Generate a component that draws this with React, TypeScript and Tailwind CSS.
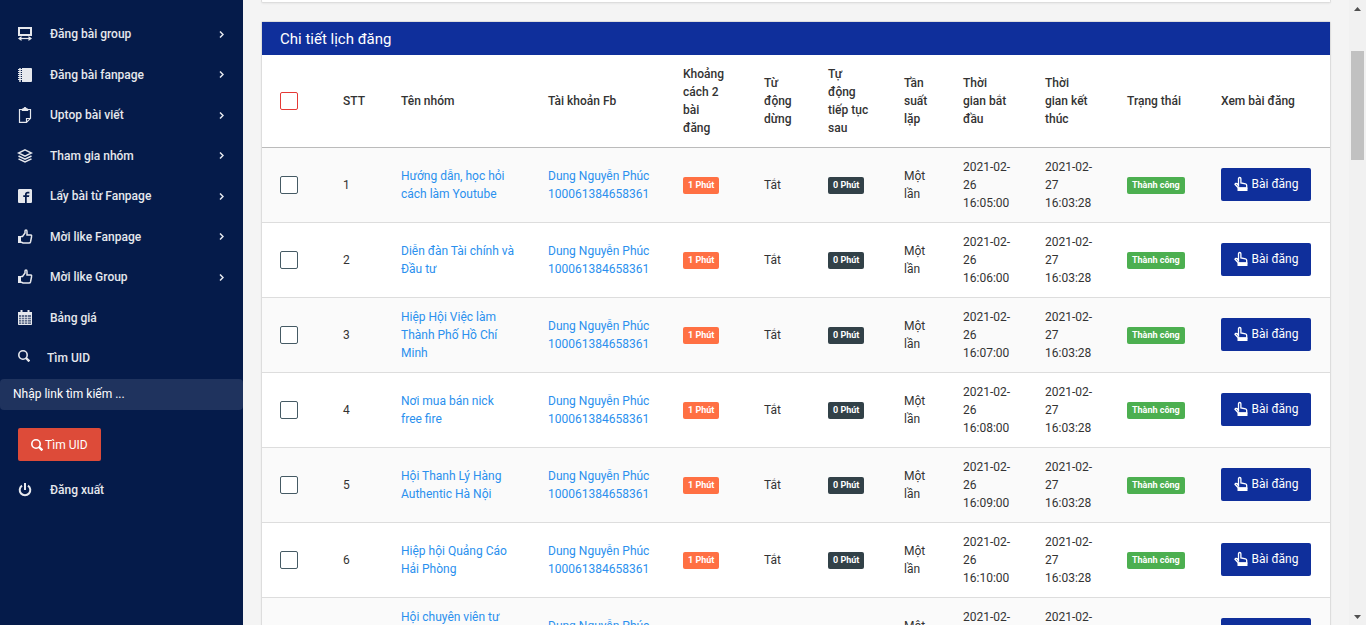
import React from 'react';
import { ImFacebook2 } from 'react-icons/im';

type IconProps = { className?: string };

const Svg: React.FC<{ children: React.ReactNode }> = ({ children }) => (
  <svg viewBox="0 0 16 16" className="size-4 shrink-0" fill="none" stroke="currentColor" aria-hidden="true">
    {children}
  </svg>
);

const WidthIcon = () => (
  <Svg>
    <path d="M2 2h12v7H2z" strokeWidth="2" />
    <path d="M2 12.500h12" strokeWidth="1.200" />
    <path d="M4.500 10v5L1 12.500zM11.500 10v5l3.500-2.500z" fill="currentColor" stroke="none" />
  </Svg>
);

const NotebookIcon = () => (
  <Svg>
    <path d="M5 1h9q1 0 1 1v12q0 1-1 1H5z" fill="currentColor" stroke="none" />
    <path d="M3 1v14" strokeWidth="1.500" />
    <path d="M1 2.500h5M1 4.500h5M1 6.500h5M1 8.500h5M1 10.500h5M1 12.500h5" />
  </Svg>
);

const ClipboardIcon = () => (
  <Svg>
    <path d="M5 2.500H2.500v12.800h7l4-4V2.500H11M9.500 15v-3.500H13" strokeWidth="1.200" />
    <path d="M5 3.500V2h1.500q0-1.500 1.500-1.500T9.500 2H11v1.500z" fill="currentColor" />
  </Svg>
);

const StackIcon = () => (
  <Svg>
    <path d="M8 1.800l6.500 3.200L8 8.200 1.500 5zM1.500 8L8 11.200 14.500 8M1.500 10.800L8 14l6.500-3.200" strokeWidth="1.500" />
  </Svg>
);

const ThumbIcon = () => (
  <Svg>
    <path d="M4 7.500h1.500L8 4V2q0-1 1-1t1 1.500V6h4q1 .5.500 2l-1 5q-.3 1-1.500 1H6l-2-1" strokeWidth="1.500" />
    <path d="M1 7h3v7H1z" fill="currentColor" stroke="none" />
  </Svg>
);

const CalendarIcon = () => (
  <Svg>
    <path d="M1 2h14v13H1z" fill="currentColor" fillOpacity=".4" stroke="none" />
    <path d="M1.500 2.500h13v12h-13z" />
    <path d="M1 2h14v3H1z" fill="currentColor" stroke="none" />
    <path d="M4.500 0v3M11.500 0v3" strokeWidth="2" />
    <path d="M4.500 5v9M7.500 5v9M10.500 5v9M2 7.500h12M2 9.500h12M2 12h12" strokeWidth=".7" />
  </Svg>
);

const SearchIcon: React.FC<IconProps> = ({ className }) => (
  <svg viewBox="0 0 12 12" className={className} fill="none" stroke="currentColor" aria-hidden="true">
    <circle cx="5" cy="5" r="4.200" strokeWidth="1.600" />
    <path d="M8 8l3.400 3.400" strokeWidth="2.400" />
  </svg>
);

const PowerIcon = () => (
  <svg viewBox="0 0 14 14" className="size-[14px]" fill="none" stroke="currentColor" strokeWidth="2" aria-hidden="true">
    <path d="M4 2.600a5.300 5.300 0 1 0 6 0M7 0v7" />
  </svg>
);

const HandIcon: React.FC<IconProps> = ({ className }) => (
  <svg viewBox="0 0 14 16" className={className} fill="none" stroke="currentColor" aria-hidden="true">
    <path d="M4.500 9.500V2.800q0-1.300 1.200-1.300t1.200 1.300V7l4.600.8q1.200.3 1.200 1.500V12H4.500L1 8.300q.5-1.500 2-.8z" strokeWidth="1.300" />
    <path d="M3.500 11.500h10V15h-10z" fill="currentColor" stroke="none" />
  </svg>
);

const ChevronIcon = () => (
  <svg viewBox="0 0 5 7" className="h-[7px] w-[5px]" fill="none" stroke="currentColor" aria-hidden="true">
    <path d="M1 .5l3 3-3 3" strokeWidth="1.500" />
  </svg>
);

const menu = [
  { label: 'Đăng bài group', icon: <WidthIcon />, nested: true },
  { label: 'Đăng bài fanpage', icon: <NotebookIcon />, nested: true },
  { label: 'Uptop bài viết', icon: <ClipboardIcon />, nested: true },
  { label: 'Tham gia nhóm', icon: <StackIcon />, nested: true },
  { label: 'Lấy bài từ Fanpage', icon: <ImFacebook2 className="m-px size-[14px]" />, nested: true },
  { label: 'Mời like Fanpage', icon: <ThumbIcon />, nested: true },
  { label: 'Mời like Group', icon: <ThumbIcon />, nested: true },
  { label: 'Bảng giá', icon: <CalendarIcon />, nested: false },
];

const columns = [
  { title: 'STT', width: 'w-[58px]' },
  { title: 'Tên nhóm', width: 'w-[147px]' },
  { title: 'Tài khoản Fb', width: 'w-[135px]' },
  { title: 'Khoảng\ncách 2\nbài\nđăng', width: 'w-[81px]' },
  { title: 'Từ\nđộng\ndừng', width: 'w-[64px]' },
  { title: 'Tự\nđộng\ntiếp tục\nsau', width: 'w-[76px]' },
  { title: 'Tần\nsuất\nlặp', width: 'w-[59px]' },
  { title: 'Thời\ngian bắt\nđầu', width: 'w-[82px]' },
  { title: 'Thời\ngian kết\nthúc', width: 'w-[82px]' },
  { title: 'Trạng thái', width: 'w-[94px]' },
  { title: 'Xem bài đăng', width: 'w-[127px]' },
];

const groups = [
  { name: 'Hướng dẫn, học hỏi cách làm Youtube', start: '16:05:00' },
  { name: 'Diễn đàn Tài chính và Đầu tư', start: '16:06:00' },
  { name: 'Hiệp Hội Việc làm Thành Phố Hồ Chí Minh', start: '16:07:00' },
  { name: 'Nơi mua bán nick free fire', start: '16:08:00' },
  { name: 'Hội Thanh Lý Hàng Authentic Hà Nội', start: '16:09:00' },
  { name: 'Hiệp hội Quảng Cáo Hải Phòng', start: '16:10:00' },
  { name: 'Hội chuyên viên tư vấn tài chính ngân hàng Việt Nam', start: '16:11:00' },
];

const Label: React.FC<{ color: string; children: React.ReactNode }> = ({ color, children }) => (
  <span className={`inline-block whitespace-nowrap rounded-xs px-[5px] text-[9px] leading-[17px] font-bold text-white align-middle ${color}`}>
    {children}
  </span>
);

const Checkbox: React.FC<{ label: string; color: string }> = ({ label, color }) => (
  <input
    type="checkbox"
    aria-label={label}
    className={`block size-[18px] appearance-none rounded-xs border bg-white checked:bg-slate-600 ${color}`}
  />
);

const Sidebar = () => (
  <aside className="w-[243px] shrink-0 bg-[#051b4a] pt-[14px] font-medium text-[#e6e8ed]">
    <nav>
      <ul className="grid h-[324px] auto-rows-fr">
        {menu.map((item) => (
          <li key={item.label} className="flex">
            <a href="#" className="flex grow items-center pr-[19px] pl-[17px]">
              {item.icon}
              <span className="ml-[17px] grow">{item.label}</span>
              {item.nested && <ChevronIcon />}
            </a>
          </li>
        ))}
      </ul>
    </nav>
    <form onSubmit={(e) => e.preventDefault()}>
      <label htmlFor="uid" className="flex h-[41px] items-center pb-[2px] pl-[18px]">
        <SearchIcon className="mb-1 size-3" />
        <span className="ml-[17px]">Tìm UID</span>
      </label>
      <input
        id="uid"
        type="text"
        placeholder="Nhập link tìm kiếm ..."
        className="block h-[31px] w-full rounded-sm bg-[#1f335e] px-[13px] pb-[2px] font-normal text-white placeholder:text-white"
      />
      <button type="submit" className="mt-[18px] ml-[18px] flex h-[33px] items-center gap-[2px] rounded-xs bg-[#dd4b39] px-[13px] font-normal text-white">
        <SearchIcon className="size-3" />
        Tìm UID
      </button>
    </form>
    <a href="#" className="mt-[9px] flex h-10 items-center pl-[18px]">
      <PowerIcon />
      <span className="ml-[18px]">Đăng xuất</span>
    </a>
  </aside>
);

const ScheduleTable = () => (
  <table className="w-full table-fixed border-collapse text-left text-[#333]">
    <thead>
      <tr className="border-b border-[#bbb]">
        <th className="w-[63px] py-[10px] pl-[18px]">
          <Checkbox label="Chọn tất cả" color="border-[#e53935]" />
        </th>
        {columns.map((col) => (
          <th key={col.title} className={`py-[10px] pl-[18px] font-medium whitespace-pre ${col.width}`}>
            {col.title}
          </th>
        ))}
      </tr>
    </thead>
    <tbody>
      {groups.map((group, i) => (
        <tr key={group.name} className="border-b border-[#ddd] odd:bg-[#fafafa]">
          <td className="py-[10px] pl-[18px]">
            <Checkbox label={group.name} color="border-[#455a64]" />
          </td>
          <td className="py-[10px] pl-[18px]">{i + 1}</td>
          <td className="py-[10px] pr-[14px] pl-[18px]">
            <a href="#" className="text-[#2a90ee]">{group.name}</a>
          </td>
          <td className="py-[10px] pl-[18px]">
            <a href="#" className="text-[#2a90ee]">
              Dung Nguyễn Phúc
              <br />
              100061384658361
            </a>
          </td>
          <td className="py-[10px] pl-[18px]"><Label color="bg-[#ff7043]">1 Phút</Label></td>
          <td className="py-[10px] pl-[18px]">Tắt</td>
          <td className="py-[10px] pl-[18px]"><Label color="bg-[#324148]">0 Phút</Label></td>
          <td className="py-[10px] pr-4 pl-[18px]">Một lần</td>
          <td className="py-[10px] pr-4 pl-[18px]">2021-02-26 {group.start}</td>
          <td className="py-[10px] pr-4 pl-[18px]">2021-02-27 16:03:28</td>
          <td className="py-[10px] pl-[18px]"><Label color="bg-[#4caf50]">Thành công</Label></td>
          <td className="pb-[2px] pl-[18px]">
            <button type="button" className="flex h-[33px] w-[90px] items-center justify-center gap-1 rounded-xs bg-[#0f2f9b] text-white">
              <HandIcon className="h-4 w-[14px]" />
              Bài đăng
            </button>
          </td>
        </tr>
      ))}
    </tbody>
  </table>
);

const Scrollbar = () => (
  <div className="flex w-[17px] shrink-0 flex-col items-center bg-[#f1f1f1] text-[#505050]" aria-hidden="true">
    <svg viewBox="0 0 17 17" className="size-[17px]" fill="currentColor"><path d="M5 11h7L8.500 7z" /></svg>
    <div className="mt-[34px] h-[109px] w-[13px] bg-[#c1c1c1]" />
    <svg viewBox="0 0 17 17" className="mt-auto size-[17px]" fill="currentColor"><path d="M5 7h7l-3.500 4z" /></svg>
  </div>
);

const App: React.FC = () => {
  return (
    <div className="flex h-screen overflow-hidden bg-[#f4f4f4] font-['Roboto',sans-serif] text-[12px] leading-[18px]">
      <Sidebar />
      <main className="min-w-0 grow overflow-hidden px-[18px]">
        <div className="h-[3px] rounded-b-xs border border-t-0 border-[#ddd] bg-white shadow-xs" />
        <section className="mt-[18px] rounded-xs border border-[#ddd] bg-white shadow-xs">
          <h2 className="bg-[#0f2f9b] px-[18px] pt-[2px] text-[15px] leading-[31px] text-white">Chi tiết lịch đăng</h2>
          <ScheduleTable />
        </section>
      </main>
      <Scrollbar />
    </div>
  );
};

export default App;
